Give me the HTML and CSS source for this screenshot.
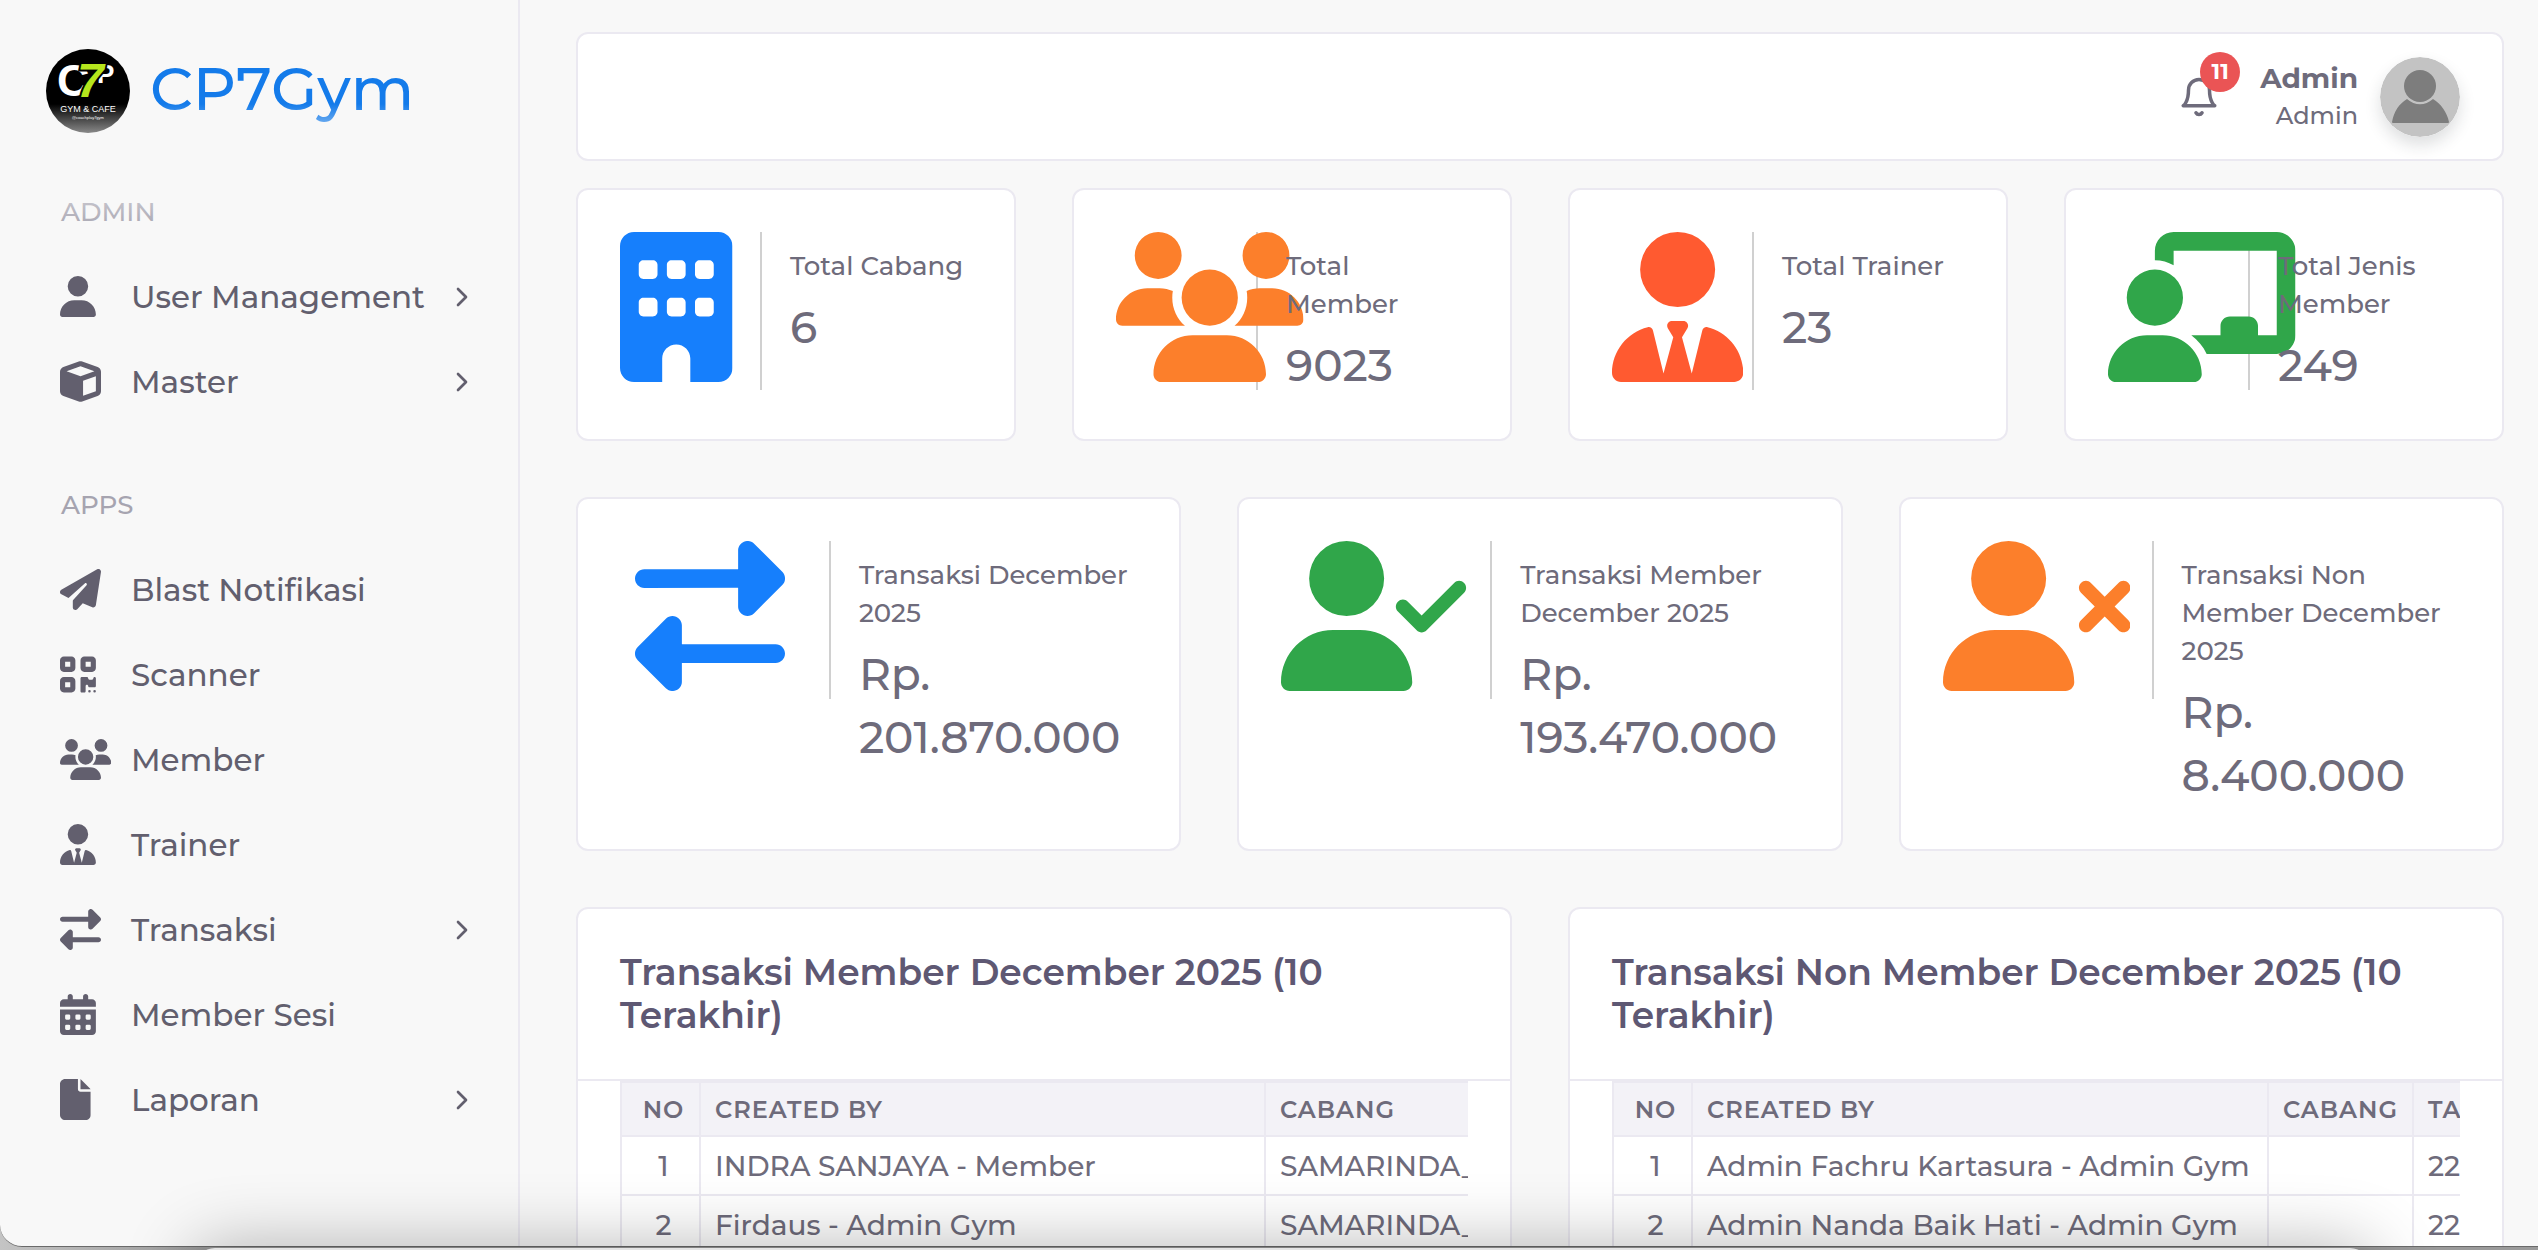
FILE: index.html
```html
<!DOCTYPE html>
<html lang="id">
<head>
    <meta charset="UTF-8">
    <meta name="viewport" content="width=device-width, initial-scale=1.0">
    <title>Dashboard - CP7Gym</title>
    <link rel="stylesheet" href="styles.css">
</head>
<body>
    <!-- Icon sprite -->
    <svg class="sprite" aria-hidden="true">
        <symbol id="i-user" viewBox="0 0 448 512"><path d="M224 256A128 128 0 1 0 224 0a128 128 0 1 0 0 256zm-45.7 48C79.8 304 0 383.8 0 482.3C0 498.7 13.3 512 29.7 512l388.6 0c16.4 0 29.7-13.3 29.7-29.7C448 383.8 368.2 304 269.7 304l-91.4 0z"/></symbol>
        <symbol id="i-cube" viewBox="0 0 512 512"><path d="M234.5 5.7c13.9-5 29.1-5 43.1 0l192 68.6C495 83.4 512 107.5 512 134.6l0 242.9c0 27-17 51.2-42.5 60.3l-192 68.6c-13.9 5-29.1 5-43.1 0l-192-68.6C17 428.6 0 404.5 0 377.4L0 134.6c0-27 17-51.2 42.5-60.3l192-68.6zM256 66L82.3 128 256 190l173.7-62L256 66zm32 368.6l160-57.1 0-188L288 246.6l0 188z"/></symbol>
        <symbol id="i-plane" viewBox="0 0 512 512"><path d="M498.1 5.6c10.1 7 15.4 19.1 13.5 31.2l-64 416c-1.5 9.7-7.4 18.2-16 23s-18.9 5.4-28 1.6L284 427.7l-68.5 74.1c-8.9 9.7-22.9 12.9-35.2 8.1S160 493.2 160 480l0-83.6c0-4 1.5-7.8 4.2-10.8L331.8 202.8c5.8-6.3 5.6-16-.4-22s-15.7-6.4-22-.7L106 360.8 17.7 316.6C7.1 311.3 .3 300.7 0 288.9s5.9-22.8 16.1-28.7l448-256c10.7-6.1 23.9-5.5 34 1.4z"/></symbol>
        <symbol id="i-qrcode" viewBox="0 0 448 512"><path d="M0 80C0 53.5 21.5 32 48 32l96 0c26.5 0 48 21.5 48 48l0 96c0 26.5-21.5 48-48 48l-96 0c-26.5 0-48-21.5-48-48L0 80zM64 96l0 64 64 0 0-64L64 96zM0 336c0-26.5 21.5-48 48-48l96 0c26.5 0 48 21.5 48 48l0 96c0 26.5-21.5 48-48 48l-96 0c-26.5 0-48-21.5-48-48l0-96zm64 16l0 64 64 0 0-64-64 0zM304 32l96 0c26.5 0 48 21.5 48 48l0 96c0 26.5-21.5 48-48 48l-96 0c-26.5 0-48-21.5-48-48l0-96c0-26.5 21.5-48 48-48zm80 64l-64 0 0 64 64 0 0-64zM256 304c0-8.8 7.2-16 16-16l64 0c8.8 0 16 7.2 16 16s7.2 16 16 16l32 0c8.8 0 16-7.2 16-16s7.2-16 16-16s16 7.2 16 16l0 96c0 8.8-7.2 16-16 16l-64 0c-8.8 0-16-7.2-16-16s-7.2-16-16-16s-16 7.2-16 16l0 64c0 8.8-7.2 16-16 16l-32 0c-8.8 0-16-7.2-16-16l0-160zM368 480a16 16 0 1 1 0-32 16 16 0 1 1 0 32zm64 0a16 16 0 1 1 0-32 16 16 0 1 1 0 32z" fill-rule="evenodd"/></symbol>
        <symbol id="i-users" viewBox="0 0 640 512"><path d="M144 0a80 80 0 1 1 0 160A80 80 0 1 1 144 0zM512 0a80 80 0 1 1 0 160A80 80 0 1 1 512 0zM0 298.7C0 239.8 47.8 192 106.7 192l42.7 0c15.9 0 31 3.5 44.6 9.7c-1.3 7.2-1.9 14.7-1.9 22.3c0 38.2 16.8 72.5 43.3 96c-.2 0-.4 0-.7 0L21.3 320C9.6 320 0 310.4 0 298.7zM405.3 320c-.2 0-.4 0-.7 0c26.6-23.5 43.3-57.8 43.3-96c0-7.6-.7-15-1.9-22.3c13.6-6.3 28.7-9.7 44.6-9.7l42.7 0C592.2 192 640 239.8 640 298.7c0 11.8-9.6 21.3-21.3 21.3l-213.3 0zM224 224a96 96 0 1 1 192 0 96 96 0 1 1 -192 0zM128 485.3C128 411.7 187.7 352 261.3 352l117.3 0C452.3 352 512 411.7 512 485.3c0 14.7-11.9 26.7-26.7 26.7l-330.7 0c-14.7 0-26.7-11.9-26.7-26.7z"/></symbol>
        <symbol id="i-user-tie" viewBox="0 0 448 512"><path d="M96 128a128 128 0 1 0 256 0A128 128 0 1 0 96 128zm94.5 200.2l18.6 31L175.8 483.1l-36-146.9c-2-8.1-9.8-13.4-17.9-11.3C51.9 342.4 0 405.8 0 481.3c0 17 13.8 30.7 30.7 30.7l131.7 0c0 0 0 0 .1 0l5.5 0 112 0 5.5 0c0 0 0 0 .1 0l131.7 0c17 0 30.7-13.8 30.7-30.7c0-75.5-51.9-138.9-121.9-156.4c-8.1-2-15.9 3.3-17.9 11.3l-36 146.9L238.9 359.2l18.6-31c6.4-10.7-1.3-24.2-13.7-24.2L224 304l-19.7 0c-12.4 0-20.1 13.6-13.7 24.2z"/></symbol>
        <symbol id="i-transfer" viewBox="0 0 512 512"><path d="M32 96l320 0 0-64c0-12.9 7.8-24.6 19.8-29.6s25.7-2.2 34.9 6.9l96 96c6 6 9.4 14.1 9.4 22.6s-3.4 16.6-9.4 22.6l-96 96c-9.2 9.2-22.9 11.9-34.9 6.9s-19.8-16.6-19.8-29.6l0-64L32 160c-17.7 0-32-14.3-32-32s14.3-32 32-32zM480 352c17.7 0 32 14.3 32 32s-14.3 32-32 32l-320 0 0 64c0 12.9-7.8 24.6-19.8 29.6s-25.7 2.2-34.9-6.9l-96-96c-6-6-9.4-14.1-9.4-22.6s3.4-16.6 9.4-22.6l96-96c9.2-9.2 22.9-11.9 34.9-6.9s19.8 16.6 19.8 29.6l0 64 320 0z"/></symbol>
        <symbol id="i-calendar" viewBox="0 0 448 512"><path fill-rule="evenodd" d="M128 0c17.7 0 32 14.3 32 32l0 32 128 0 0-32c0-17.7 14.3-32 32-32s32 14.3 32 32l0 32 48 0c26.5 0 48 21.5 48 48l0 48L0 160l0-48C0 85.5 21.5 64 48 64l48 0 0-32c0-17.7 14.3-32 32-32zM0 192l448 0 0 272c0 26.5-21.5 48-48 48L48 512c-26.5 0-48-21.5-48-48L0 192zM80 256h32a16 16 0 0 1 16 16v32a16 16 0 0 1-16 16h-32a16 16 0 0 1-16-16v-32a16 16 0 0 1 16-16zM208 256h32a16 16 0 0 1 16 16v32a16 16 0 0 1-16 16h-32a16 16 0 0 1-16-16v-32a16 16 0 0 1 16-16zM336 256h32a16 16 0 0 1 16 16v32a16 16 0 0 1-16 16h-32a16 16 0 0 1-16-16v-32a16 16 0 0 1 16-16zM80 384h32a16 16 0 0 1 16 16v32a16 16 0 0 1-16 16h-32a16 16 0 0 1-16-16v-32a16 16 0 0 1 16-16zM208 384h32a16 16 0 0 1 16 16v32a16 16 0 0 1-16 16h-32a16 16 0 0 1-16-16v-32a16 16 0 0 1 16-16zM336 384h32a16 16 0 0 1 16 16v32a16 16 0 0 1-16 16h-32a16 16 0 0 1-16-16v-32a16 16 0 0 1 16-16z"/></symbol>
        <symbol id="i-file" viewBox="0 0 384 512"><path d="M0 64C0 28.7 28.7 0 64 0L224 0l0 128c0 17.7 14.3 32 32 32l128 0 0 288c0 35.3-28.7 64-64 64L64 512c-35.3 0-64-28.7-64-64L0 64zm384 64l-128 0L256 0 384 128z"/></symbol>
        <symbol id="i-building" viewBox="0 0 384 512"><path d="M48 0C21.5 0 0 21.5 0 48L0 464c0 26.5 21.5 48 48 48l96 0 0-80c0-26.5 21.5-48 48-48s48 21.5 48 48l0 80 96 0c26.5 0 48-21.5 48-48l0-416c0-26.5-21.5-48-48-48L48 0zM64 240c0-8.8 7.2-16 16-16l32 0c8.8 0 16 7.2 16 16l0 32c0 8.8-7.2 16-16 16l-32 0c-8.8 0-16-7.2-16-16l0-32zm112-16l32 0c8.8 0 16 7.2 16 16l0 32c0 8.8-7.2 16-16 16l-32 0c-8.8 0-16-7.2-16-16l0-32c0-8.8 7.2-16 16-16zm80 16c0-8.8 7.2-16 16-16l32 0c8.8 0 16 7.2 16 16l0 32c0 8.8-7.2 16-16 16l-32 0c-8.8 0-16-7.2-16-16l0-32zM80 96l32 0c8.8 0 16 7.2 16 16l0 32c0 8.8-7.2 16-16 16l-32 0c-8.8 0-16-7.2-16-16l0-32c0-8.8 7.2-16 16-16zm80 16c0-8.8 7.2-16 16-16l32 0c8.8 0 16 7.2 16 16l0 32c0 8.8-7.2 16-16 16l-32 0c-8.8 0-16-7.2-16-16l0-32zM272 96l32 0c8.8 0 16 7.2 16 16l0 32c0 8.8-7.2 16-16 16l-32 0c-8.8 0-16-7.2-16-16l0-32c0-8.8 7.2-16 16-16z" fill-rule="evenodd"/></symbol>
        <symbol id="i-chalkboard" viewBox="0 0 640 512"><path d="M160 64c0-35.3 28.7-64 64-64L576 0c35.3 0 64 28.7 64 64l0 288c0 35.3-28.7 64-64 64l-239.2 0c-11.8-25.5-29.9-47.5-52.4-64l99.6 0 0-32c0-17.7 14.3-32 32-32l64 0c17.7 0 32 14.3 32 32l0 32 64 0 0-288L224 64l0 49.1C205.2 102.2 183.3 96 160 96l0-32zm0 64a96 96 0 1 1 0 192 96 96 0 1 1 0-192zM133.3 352l53.3 0C260.3 352 320 411.7 320 485.3c0 14.7-11.9 26.7-26.7 26.7L26.7 512C11.9 512 0 500.1 0 485.3C0 411.7 59.7 352 133.3 352z"/></symbol>
        <symbol id="i-user-check" viewBox="0 0 640 512"><path d="M96 128a128 128 0 1 1 256 0A128 128 0 1 1 96 128zM0 482.3C0 383.8 79.8 304 178.3 304l91.4 0C368.2 304 448 383.8 448 482.3c0 16.4-13.3 29.7-29.7 29.7L29.7 512C13.3 512 0 498.7 0 482.3zM625 177L497 305c-9.4 9.4-24.6 9.4-33.9 0l-64-64c-9.4-9.4-9.4-24.6 0-33.9s24.6-9.4 33.9 0l47 47L591 143c9.4-9.4 24.6-9.4 33.9 0s9.4 24.6 0 33.9z"/></symbol>
        <symbol id="i-user-xmark" viewBox="0 0 640 512"><path d="M96 128a128 128 0 1 1 256 0A128 128 0 1 1 96 128zM0 482.3C0 383.8 79.8 304 178.3 304l91.4 0C368.2 304 448 383.8 448 482.3c0 16.4-13.3 29.7-29.7 29.7L29.7 512C13.3 512 0 498.7 0 482.3zM471 143c9.4-9.4 24.6-9.4 33.9 0l47 47 47-47c9.4-9.4 24.6-9.4 33.9 0s9.4 24.6 0 33.9l-47 47 47 47c9.4 9.4 9.4 24.6 0 33.9s-24.6 9.4-33.9 0l-47-47-47 47c-9.4 9.4-24.6 9.4-33.9 0s-9.4-24.6 0-33.9l47-47-47-47c-9.4-9.4-9.4-24.6 0-33.9z"/></symbol>
        <symbol id="i-chevron" viewBox="0 0 24 24"><polyline points="9 18 15 12 9 6" fill="none" stroke="currentColor" stroke-width="2" stroke-linecap="round" stroke-linejoin="round"/></symbol>
    </svg>

    <div class="app">
        <aside class="sidebar">
            <a class="brand" href="#">
                <svg class="brand-logo" viewBox="0 0 84 84" role="img" aria-label="CP7 Gym &amp; Cafe">
                    <circle cx="42" cy="42" r="42" fill="#000"/>
                    <text x="11" y="47" class="logo-letter" font-size="45">C</text>
                    <text x="51" y="34" class="logo-letter" font-size="26">P</text>
                    <text x="31" y="48" class="logo-seven" font-size="48">7</text>
                    <text x="42" y="63" class="logo-name" font-size="9" text-anchor="middle">GYM &amp; CAFE</text>
                    <text x="42" y="70" class="logo-name" font-size="4" text-anchor="middle">@coachplay7gym</text>
                </svg>
                <span class="brand-text">CP7Gym</span>
            </a>
            <nav class="menu">
                <h6 class="menu-title">ADMIN</h6>
                <a class="menu-item" href="#"><span class="menu-icon"><svg viewBox="0 0 448 512"><use href="#i-user"/></svg></span>User Management<svg class="chevron"><use href="#i-chevron"/></svg></a>
                <a class="menu-item" href="#"><span class="menu-icon"><svg viewBox="0 0 512 512"><use href="#i-cube"/></svg></span>Master<svg class="chevron"><use href="#i-chevron"/></svg></a>
                <h6 class="menu-title">APPS</h6>
                <a class="menu-item" href="#"><span class="menu-icon"><svg viewBox="0 0 512 512"><use href="#i-plane"/></svg></span>Blast Notifikasi</a>
                <a class="menu-item" href="#"><span class="menu-icon"><svg viewBox="0 0 448 512"><use href="#i-qrcode"/></svg></span>Scanner</a>
                <a class="menu-item" href="#"><span class="menu-icon"><svg viewBox="0 0 640 512"><use href="#i-users"/></svg></span>Member</a>
                <a class="menu-item" href="#"><span class="menu-icon"><svg viewBox="0 0 448 512"><use href="#i-user-tie"/></svg></span>Trainer</a>
                <a class="menu-item" href="#"><span class="menu-icon"><svg viewBox="0 0 512 512"><use href="#i-transfer"/></svg></span>Transaksi<svg class="chevron"><use href="#i-chevron"/></svg></a>
                <a class="menu-item" href="#"><span class="menu-icon"><svg viewBox="0 0 448 512"><use href="#i-calendar"/></svg></span>Member Sesi</a>
                <a class="menu-item" href="#"><span class="menu-icon"><svg viewBox="0 0 384 512"><use href="#i-file"/></svg></span>Laporan<svg class="chevron"><use href="#i-chevron"/></svg></a>
            </nav>
        </aside>

        <main class="content">
            <header class="navbar">
                <a class="bell" href="#" aria-label="Notifikasi">
                    <svg viewBox="0 0 24 24" fill="none" stroke="currentColor" stroke-width="2" stroke-linecap="round" stroke-linejoin="round"><path d="M18 8A6 6 0 0 0 6 8c0 7-3 9-3 9h18s-3-2-3-9"/><path d="M13.73 21a2 2 0 0 1-3.46 0"/></svg>
                    <span class="badge">11</span>
                </a>
                <div class="user">
                    <span class="user-name">Admin</span>
                    <span class="user-role">Admin</span>
                </div>
                <svg class="avatar" viewBox="0 0 80 80" role="img" aria-label="Admin">
                    <circle cx="40" cy="40" r="40" fill="#c3c3c3"/>
                    <path d="M12 65c2-11 7-18 15-23 8 7 18 7 26 0 8 5 14 13 16 23q0 1-1 1H13q-1 0-1-1z" fill="#7d7d7d"/>
                    <circle cx="40" cy="29" r="16" fill="#7d7d7d"/>
                </svg>
            </header>

            <section class="grid grid-4">
                <div class="card stat">
                    <div class="stat-icon blue"><svg viewBox="0 0 384 512"><use href="#i-building"/></svg></div>
                    <div class="stat-body"><p>Total Cabang</p><h2>6</h2></div>
                </div>
                <div class="card stat">
                    <div class="stat-icon orange"><svg viewBox="0 0 640 512"><use href="#i-users"/></svg></div>
                    <div class="stat-body"><p>Total Member</p><h2>9023</h2></div>
                </div>
                <div class="card stat">
                    <div class="stat-icon red"><svg viewBox="0 0 448 512"><use href="#i-user-tie"/></svg></div>
                    <div class="stat-body"><p>Total Trainer</p><h2>23</h2></div>
                </div>
                <div class="card stat">
                    <div class="stat-icon green"><svg viewBox="0 0 640 512"><use href="#i-chalkboard"/></svg></div>
                    <div class="stat-body"><p>Total Jenis Member</p><h2>249</h2></div>
                </div>
            </section>

            <section class="grid grid-3">
                <div class="card stat">
                    <div class="stat-icon blue"><svg viewBox="0 0 512 512"><use href="#i-transfer"/></svg></div>
                    <div class="stat-body"><p>Transaksi December 2025</p><h2>Rp. 201.870.000</h2></div>
                </div>
                <div class="card stat">
                    <div class="stat-icon green"><svg viewBox="0 0 640 512"><use href="#i-user-check"/></svg></div>
                    <div class="stat-body"><p>Transaksi Member December 2025</p><h2>Rp. 193.470.000</h2></div>
                </div>
                <div class="card stat">
                    <div class="stat-icon orange"><svg viewBox="0 0 640 512"><use href="#i-user-xmark"/></svg></div>
                    <div class="stat-body"><p>Transaksi Non Member December 2025</p><h2>Rp. 8.400.000</h2></div>
                </div>
            </section>

            <section class="grid grid-2">
                <div class="card">
                    <div class="card-header"><h4>Transaksi Member December 2025 (10 Terakhir)</h4></div>
                    <div class="table-responsive">
                        <table>
                            <colgroup><col class="col-no"><col class="col-member"><col></colgroup>
                            <thead>
                                <tr><th>No</th><th>Created By</th><th>Cabang</th></tr>
                            </thead>
                            <tbody>
                                <tr><td>1</td><td>INDRA SANJAYA - Member</td><td>SAMARINDA_</td></tr>
                                <tr><td>2</td><td>Firdaus - Admin Gym</td><td>SAMARINDA_</td></tr>
                            </tbody>
                        </table>
                    </div>
                </div>
                <div class="card">
                    <div class="card-header"><h4>Transaksi Non Member December 2025 (10 Terakhir)</h4></div>
                    <div class="table-responsive">
                        <table>
                            <colgroup><col class="col-no"><col class="col-admin"><col class="col-branch"><col></colgroup>
                            <thead>
                                <tr><th>No</th><th>Created By</th><th>Cabang</th><th>Tanggal</th></tr>
                            </thead>
                            <tbody>
                                <tr><td>1</td><td>Admin Fachru Kartasura - Admin Gym</td><td></td><td>22</td></tr>
                                <tr><td>2</td><td>Admin Nanda Baik Hati - Admin Gym</td><td></td><td>22</td></tr>
                            </tbody>
                        </table>
                    </div>
                </div>
            </section>
        </main>
    </div>
    <div class="window-behind"></div>
</body>
</html>
```
FILE: styles.css
```css
* {
    box-sizing: border-box;
}
body {
    margin: 0;
    height: 100vh;
    overflow: hidden;
    background: linear-gradient(90deg, #c4c4c4, #9a9a9a 8%, #9a9a9a);
    font-family: Montserrat, Inter, sans-serif;
    font-size: 28px;
    font-weight: 500;
    color: #6e6b7b;
}
h2, h4, h6, p {
    margin: 0;
    font-weight: 500;
}
a {
    color: inherit;
    text-decoration: none;
}
svg {
    fill: currentColor;
}
.sprite {
    display: none;
}
.app {
    display: flex;
    height: calc(100vh - 3px);
    overflow: hidden;
    background: #f8f8f8;
    border-bottom: 1px solid #6a6a6a;
    border-bottom-left-radius: 22px;
}

/* Sidebar */
.sidebar {
    position: relative;
    flex: 0 0 520px;
    border-right: 2px solid #ebe9f1;
    color: #625f6e;
}
.sidebar::after {
    content: "";
    position: absolute;
    top: 104px;
    left: 0;
    right: 0;
    height: 126px;
    background: linear-gradient(rgba(248, 248, 248, 0), rgba(248, 248, 248, 0.6) 25%, rgba(248, 248, 248, 0.4) 75%, rgba(248, 248, 248, 0));
    pointer-events: none;
}
.brand {
    display: flex;
    align-items: center;
    gap: 20px;
    padding: 49px 0 0 46px;
}
.brand-logo {
    width: 84px;
    height: 84px;
}
.brand-text {
    padding-bottom: 4px;
    font-size: 60px;
    line-height: 80px;
    color: #147bea;
}
.logo-letter {
    fill: #fff;
    font-family: "Liberation Sans", sans-serif;
    font-weight: 700;
}
.logo-seven {
    fill: #b5e61d;
    stroke: #000;
    stroke-width: 4px;
    paint-order: stroke;
    font-family: "Liberation Sans", sans-serif;
    font-style: italic;
    font-weight: 700;
}
.logo-name {
    fill: #fff;
    font-family: "Liberation Sans", sans-serif;
}
.menu-title {
    padding: 63px 0 0 61px;
    font-size: 26px;
    line-height: 32px;
    color: #a6a4b0;
}
.menu-item + .menu-title {
    padding-top: 65px;
}
.menu-title + .menu-item {
    margin-top: 26px;
}
.menu-item {
    display: flex;
    align-items: center;
    height: 85px;
    padding: 0 40px 0 60px;
    font-size: 31px;
}
.menu-icon {
    flex: 0 0 71px;
    height: 41px;
}
.menu-icon svg {
    height: 41px;
}
.chevron {
    width: 32px;
    height: 32px;
    margin-left: auto;
}

/* Main */
.content {
    flex: 1;
    min-width: 0;
    padding: 32px 34px 0 56px;
}
.card, .navbar {
    background: #fff;
    border: 2px solid #ebe9f1;
    border-radius: 12px;
}
.navbar {
    display: flex;
    align-items: center;
    justify-content: flex-end;
    height: 129px;
    padding: 0 42px;
    margin-bottom: 27px;
}
.bell {
    position: relative;
    height: 42px;
    margin-right: 40px;
}
.bell svg {
    width: 42px;
    height: 42px;
    fill: none;
}
.badge {
    position: absolute;
    top: -24px;
    left: 22px;
    width: 40px;
    border-radius: 50%;
    background: #ea5455;
    color: #fff;
    font-size: 22px;
    font-weight: 700;
    line-height: 40px;
    text-align: center;
}
.user {
    display: flex;
    flex-direction: column;
    align-items: flex-end;
    margin-right: 22px;
}
.user-name {
    font-size: 28px;
    font-weight: 700;
    line-height: 37px;
}
.user-role {
    font-size: 24px;
    line-height: 37px;
}
.avatar {
    width: 80px;
    height: 80px;
    border-radius: 50%;
    box-shadow: 0 8px 16px rgba(34, 41, 47, 0.15);
}
.grid {
    display: grid;
    gap: 56px;
    margin-bottom: 56px;
}
.grid-4 {
    grid-template-columns: repeat(4, minmax(0, 1fr));
}
.grid-3 {
    grid-template-columns: repeat(3, minmax(0, 1fr));
}
.grid-2 {
    grid-template-columns: repeat(2, minmax(0, 1fr));
}
.stat {
    display: flex;
    align-items: flex-start;
    padding: 42px 14px;
}
/* Wide icons are allowed to run over the divider */
.stat-icon {
    display: flex;
    justify-content: safe center;
    flex: 0 0 41.6667%;
    min-width: 0;
    height: 158px;
    padding: 0 28px;
    border-right: 2px solid #d0d0d0;
}
.stat-icon svg {
    flex: none;
    height: 150px;
}
.stat-body {
    position: relative;
    flex: 1;
    min-width: 0;
    padding: 15px 28px 0;
}
.stat-body p {
    margin-bottom: 11px;
    font-size: 26px;
    line-height: 38px;
}
.stat-body h2 {
    font-size: 44px;
    line-height: 63px;
}
.blue {
    color: #167ffc;
}
.orange {
    color: #fc7f2b;
}
.red {
    color: #ff5a30;
}
.green {
    color: #30a64a;
}

/* Tables */
.card-header {
    padding: 42px;
    border-bottom: 2px solid #ebe9f1;
}
.card-header h4 {
    font-size: 36px;
    font-weight: 600;
    line-height: 43px;
    color: #5e5873;
}
.table-responsive {
    margin: 0 42px;
    overflow: hidden;
}
table {
    border-collapse: collapse;
    table-layout: fixed;
    width: 1100px;
}
th, td {
    height: 59px;
    padding: 0 14px;
    border: 2px solid #ebe9f1;
    font-size: 28px;
    text-align: left;
    white-space: nowrap;
}
th {
    height: 54px;
    background: #f3f2f7;
    font-size: 24px;
    font-weight: 600;
    letter-spacing: 1px;
    text-transform: uppercase;
}
th:first-child, td:first-child {
    padding: 0 10px 0 16px;
    text-align: center;
}
.col-no {
    width: 79px;
}
.col-member {
    width: 565px;
}
.col-admin {
    width: 576px;
}
.col-branch {
    width: 145px;
}

/* Window peeking out below, it throws a shadow upwards */
.window-behind {
    position: fixed;
    left: 195px;
    right: 168px;
    bottom: -300px;
    height: 302px;
    border-radius: 20px;
    background: #e4e4e4;
    box-shadow: 0 0 70px rgba(0, 0, 0, 0.3);
}
```
